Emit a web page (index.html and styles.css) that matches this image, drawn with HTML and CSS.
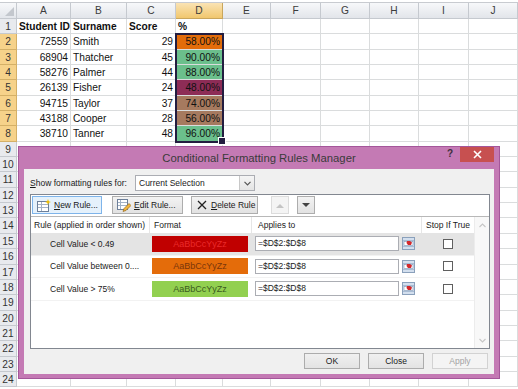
FILE: index.html
```html
<!DOCTYPE html>
<html lang="en">
<head>
    <meta charset="UTF-8">
    <title>Conditional Formatting Rules Manager</title>
    <link rel="stylesheet" href="styles.css">
</head>
<body>
    <div class="sheet">
        <div class="corner"></div>
        <div class="ch">A</div><div class="ch">B</div><div class="ch">C</div><div class="ch on">D</div><div class="ch">E</div><div class="ch">F</div><div class="ch">G</div><div class="ch">H</div><div class="ch">I</div><div class="ch">J</div>

        <div class="rh">1</div><div class="b">Student ID</div><div class="b">Surname</div><div class="b">Score</div><div class="b">%</div><div></div><div></div><div></div><div></div><div></div><div></div>
        <div class="rh on">2</div><div class="n">72559</div><div>Smith</div><div class="n">29</div><div class="n orange">58.00%</div><div></div><div></div><div></div><div></div><div></div><div></div>
        <div class="rh on">3</div><div class="n">68904</div><div>Thatcher</div><div class="n">45</div><div class="n green">90.00%</div><div></div><div></div><div></div><div></div><div></div><div></div>
        <div class="rh on">4</div><div class="n">58276</div><div>Palmer</div><div class="n">44</div><div class="n green">88.00%</div><div></div><div></div><div></div><div></div><div></div><div></div>
        <div class="rh on">5</div><div class="n">26139</div><div>Fisher</div><div class="n">24</div><div class="n maroon">48.00%</div><div></div><div></div><div></div><div></div><div></div><div></div>
        <div class="rh on">6</div><div class="n">94715</div><div>Taylor</div><div class="n">37</div><div class="n brown">74.00%</div><div></div><div></div><div></div><div></div><div></div><div></div>
        <div class="rh on">7</div><div class="n">43188</div><div>Cooper</div><div class="n">28</div><div class="n brown">56.00%</div><div></div><div></div><div></div><div></div><div></div><div></div>
        <div class="rh on">8</div><div class="n">38710</div><div>Tanner</div><div class="n">48</div><div class="n green">96.00%</div><div></div><div></div><div></div><div></div><div></div><div></div>
        <div class="rh">9</div><div></div><div></div><div></div><div></div><div></div><div></div><div></div><div></div><div></div><div></div>
        <div class="rh">10</div><div></div><div></div><div></div><div></div><div></div><div></div><div></div><div></div><div></div><div></div>
        <div class="rh">11</div><div></div><div></div><div></div><div></div><div></div><div></div><div></div><div></div><div></div><div></div>
        <div class="rh">12</div><div></div><div></div><div></div><div></div><div></div><div></div><div></div><div></div><div></div><div></div>
        <div class="rh">13</div><div></div><div></div><div></div><div></div><div></div><div></div><div></div><div></div><div></div><div></div>
        <div class="rh">14</div><div></div><div></div><div></div><div></div><div></div><div></div><div></div><div></div><div></div><div></div>
        <div class="rh">15</div><div></div><div></div><div></div><div></div><div></div><div></div><div></div><div></div><div></div><div></div>
        <div class="rh">16</div><div></div><div></div><div></div><div></div><div></div><div></div><div></div><div></div><div></div><div></div>
        <div class="rh">17</div><div></div><div></div><div></div><div></div><div></div><div></div><div></div><div></div><div></div><div></div>
        <div class="rh">18</div><div></div><div></div><div></div><div></div><div></div><div></div><div></div><div></div><div></div><div></div>
        <div class="rh">19</div><div></div><div></div><div></div><div></div><div></div><div></div><div></div><div></div><div></div><div></div>
        <div class="rh">20</div><div></div><div></div><div></div><div></div><div></div><div></div><div></div><div></div><div></div><div></div>
        <div class="rh">21</div><div></div><div></div><div></div><div></div><div></div><div></div><div></div><div></div><div></div><div></div>
        <div class="rh">22</div><div></div><div></div><div></div><div></div><div></div><div></div><div></div><div></div><div></div><div></div>
        <div class="rh">23</div><div></div><div></div><div></div><div></div><div></div><div></div><div></div><div></div><div></div><div></div>
        <div class="rh">24</div><div></div><div></div><div></div><div></div><div></div><div></div><div></div><div></div><div></div><div></div>
    </div>
    <div class="selection"></div>

    <div class="dialog">
        <div class="titlebar">
            <div class="spacer"></div>
            <div class="title">Conditional Formatting Rules Manager</div>
            <div class="controls">
                <span class="help">?</span>
                <span class="close">
                    <svg width="9" height="9" viewBox="0 0 9 9"><path d="M1 1l7 7M8 1l-7 7" stroke="#fff" stroke-width="1.6"/></svg>
                </span>
            </div>
        </div>
        <div class="body">
            <div class="showfor">
                <label><u>S</u>how formatting rules for:</label>
                <div class="select">
                    <span>Current Selection</span>
                    <span class="drop">
                        <svg width="7" height="5" viewBox="0 0 7 5"><path d="M0.5 0.8l3 3 3-3" fill="none" stroke="#555" stroke-width="1.2"/></svg>
                    </span>
                </div>
            </div>
            <div class="panel">
                <div class="toolbar">
                    <div class="tb hot new">
                        <svg width="14" height="13" viewBox="0 0 14 13"><rect x="0.5" y="2.5" width="11" height="10" fill="#fff" stroke="#6d7f99"/><path d="M1 5.5h10M1 8.5h10M4.5 3v9" stroke="#a3b2c6"/><path d="M11 0l0.8 2.2 2.2 0.8-2.2 0.8L11 6l-0.8-2.2L8 3l2.2-0.8z" fill="#f2c000"/></svg>
                        <span><u>N</u>ew Rule...</span>
                    </div>
                    <div class="tb edit">
                        <svg width="14" height="13" viewBox="0 0 14 13"><rect x="0.5" y="0.5" width="10" height="10" fill="#fff" stroke="#6d7f99"/><path d="M1 3.5h9M1 6.5h9M3.5 1v9" stroke="#a3b2c6"/><path d="M6 12.5l1-3 5-5 2 2-5 5z" fill="#f0b43c" stroke="#8a5a10" stroke-width="0.6"/></svg>
                        <span><u>E</u>dit Rule...</span>
                    </div>
                    <div class="tb delete">
                        <svg width="10" height="10" viewBox="0 0 10 10"><path d="M1 1l8 8M9 1l-8 8" stroke="#222" stroke-width="1.3"/></svg>
                        <span><u>D</u>elete Rule</span>
                    </div>
                    <div class="tb arrow up">
                        <svg width="8" height="5" viewBox="0 0 8 5"><path d="M0 5l4-4 4 4z" fill="#c4c4c4"/></svg>
                    </div>
                    <div class="tb arrow down">
                        <svg width="8" height="5" viewBox="0 0 8 5"><path d="M0 0l4 4 4-4z" fill="#444"/></svg>
                    </div>
                </div>
                <div class="main">
                    <div class="rules">
                        <div class="rhead">
                            <div>Rule (applied in order shown)</div>
                            <div>Format</div>
                            <div>Applies to</div>
                            <div>Stop If True</div>
                        </div>
                        <div class="rule sel">
                            <div class="name">Cell Value &lt; 0.49</div>
                            <div><div class="swatch red">AaBbCcYyZz</div></div>
                            <div class="applies">
                                <div class="input">=$D$2:$D$8</div>
                                <svg width="13" height="13" viewBox="0 0 13 13"><rect x="0.5" y="0.5" width="12" height="12" fill="#d3dfee" stroke="#8aa0bb"/><path d="M1 3.5h11M1 9.5h11" stroke="#a9bcd4"/><rect x="2" y="4.5" width="9" height="4" fill="#fff" stroke="#7d95b3" stroke-width="0.6"/><path d="M5 4h3l2 1.5-1 2.5H6l-1.5-2z" fill="#d3282c"/></svg>
                            </div>
                            <div class="stop"><span class="check"></span></div>
                        </div>
                        <div class="rule">
                            <div class="name">Cell Value between 0....</div>
                            <div><div class="swatch orange">AaBbCcYyZz</div></div>
                            <div class="applies">
                                <div class="input">=$D$2:$D$8</div>
                                <svg width="13" height="13" viewBox="0 0 13 13"><rect x="0.5" y="0.5" width="12" height="12" fill="#d3dfee" stroke="#8aa0bb"/><path d="M1 3.5h11M1 9.5h11" stroke="#a9bcd4"/><rect x="2" y="4.5" width="9" height="4" fill="#fff" stroke="#7d95b3" stroke-width="0.6"/><path d="M5 4h3l2 1.5-1 2.5H6l-1.5-2z" fill="#d3282c"/></svg>
                            </div>
                            <div class="stop"><span class="check"></span></div>
                        </div>
                        <div class="rule">
                            <div class="name">Cell Value &gt; 75%</div>
                            <div><div class="swatch lime">AaBbCcYyZz</div></div>
                            <div class="applies">
                                <div class="input">=$D$2:$D$8</div>
                                <svg width="13" height="13" viewBox="0 0 13 13"><rect x="0.5" y="0.5" width="12" height="12" fill="#d3dfee" stroke="#8aa0bb"/><path d="M1 3.5h11M1 9.5h11" stroke="#a9bcd4"/><rect x="2" y="4.5" width="9" height="4" fill="#fff" stroke="#7d95b3" stroke-width="0.6"/><path d="M5 4h3l2 1.5-1 2.5H6l-1.5-2z" fill="#d3282c"/></svg>
                            </div>
                            <div class="stop"><span class="check"></span></div>
                        </div>
                    </div>
                    <div class="scroll">
                        <svg width="7" height="5" viewBox="0 0 7 5"><path d="M0.5 4l3-3 3 3" fill="none" stroke="#c6c6c6" stroke-width="1.1"/></svg>
                        <svg width="7" height="5" viewBox="0 0 7 5"><path d="M0.5 1l3 3 3-3" fill="none" stroke="#c6c6c6" stroke-width="1.1"/></svg>
                    </div>
                </div>
            </div>
            <div class="footer">
                <div class="btn">OK</div>
                <div class="btn">Close</div>
                <div class="btn off">Apply</div>
            </div>
        </div>
    </div>
</body>
</html>
```

FILE: styles.css
```css
:root {
    --grid: #dadcdd;
    --head-line: #c5c9cf;
    --frame: #c47ab4;
    --dlg-bg: #f0f0f0;
}
* {
    box-sizing: border-box;
}
body {
    margin: 0;
    width: 518px;
    height: 389px;
    overflow: hidden;
    position: relative;
    background: #fff;
    font-family: "Liberation Sans", Arial, sans-serif;
}

/* feuille de calcul */
.sheet {
    display: grid;
    grid-template-columns: 17px 54px 56px 49px 47px 48px 50px 49px 49px 50px 49px;
    grid-template-rows: 16px;
    grid-auto-rows: 15.35px;
    margin-top: 2px;
    border-top: 1px solid #c8cbd0;
    font-size: 10.2px;
    color: #111;
}
.sheet > div {
    border-right: 1px solid var(--grid);
    border-bottom: 1px solid var(--grid);
    padding: 0 2px;
    line-height: 15px;
    white-space: nowrap;
    overflow: hidden;
}
.sheet .b {
    font-weight: bold;
}
.sheet .n {
    text-align: right;
}
.sheet .corner {
    position: relative;
    background: linear-gradient(#f7f8fa, #e3e6eb);
    border-color: var(--head-line);
}
.sheet .corner::after {
    content: '';
    position: absolute;
    right: 2px;
    bottom: 2px;
    border-left: 9px solid transparent;
    border-bottom: 9px solid #c3c7cd;
}
.sheet .ch {
    background: linear-gradient(#f7f8fa, #e2e5ea);
    border-color: var(--head-line);
    text-align: center;
    color: #3c3c3c;
    line-height: 16px;
}
.sheet .ch.on {
    background: linear-gradient(#fae3b4, #f1c76e);
    border-color: #c9a65c;
}
.sheet .rh {
    background: #e8eaee;
    border-color: var(--head-line);
    text-align: center;
    color: #333;
    padding: 0;
}
.sheet .rh.on {
    background: #f6d28a;
    border-color: #d4b067;
}
.sheet .orange { background: #e36c0a; }
.sheet .green { background: #6bbf8c; }
.sheet .maroon { background: #8d2c56; }
.sheet .brown { background: #a67a5f; }

.selection {
    position: absolute;
    left: 175px;
    top: 33.4px;
    width: 49px;
    height: 109.4px;
    border: 2px solid #231d40;
}
.selection::after {
    content: '';
    position: absolute;
    right: -4px;
    bottom: -4px;
    width: 6px;
    height: 6px;
    background: #231d40;
    border: 1px solid #fff;
}

/* fenetre de dialogue */
.dialog {
    position: absolute;
    left: 18px;
    top: 146px;
    width: 482px;
    height: 233px;
    background: var(--frame);
    border: 1px solid #a4569a;
    padding: 0 5px 4px;
    display: flex;
    flex-direction: column;
    font-size: 8.5px;
    color: #1a1a1a;
}
.titlebar {
    height: 22px;
    display: flex;
    align-items: flex-start;
    margin: 0 -5px;
}
.titlebar .spacer,
.titlebar .controls {
    width: 56px;
}
.titlebar .title {
    flex: 1;
    text-align: center;
    line-height: 23px;
    font-size: 11.3px;
    color: #3a3a3a;
}
.titlebar .controls {
    display: flex;
    align-items: flex-start;
    justify-content: flex-end;
    padding-right: 5px;
}
.titlebar .help {
    font-weight: bold;
    font-size: 10px;
    color: #3e2f3c;
    line-height: 14px;
    margin-right: 7px;
}
.titlebar .close {
    width: 34px;
    height: 15px;
    background: #c75050;
    display: flex;
    align-items: center;
    justify-content: center;
}
.body {
    flex: 1;
    background: var(--dlg-bg);
    padding: 6px 4px 0 6px;
}
.showfor {
    display: flex;
    align-items: center;
    height: 16px;
}
.showfor label {
    width: 105px;
}
.select {
    width: 120px;
    height: 16px;
    background: #fff;
    border: 1px solid #abadb3;
    padding-left: 3px;
    display: flex;
    align-items: center;
    justify-content: space-between;
}
.select .drop {
    width: 15px;
    height: 14px;
    border-left: 1px solid #c8c8c8;
    background: linear-gradient(#f5f5f5, #e4e4e4);
    display: flex;
    align-items: center;
    justify-content: center;
}

.panel {
    width: 460px;
    height: 155px;
    margin-top: 3px;
    background: #fff;
    border: 1px solid #828790;
    display: flex;
    flex-direction: column;
}
.toolbar {
    display: flex;
    padding: 1px 1px 2px;
    border-bottom: 1px solid #b8b8b8;
}
.tb {
    height: 18px;
    flex-shrink: 0;
    border: 1px solid #adadad;
    background: linear-gradient(#f3f3f3, #e2e2e2);
    display: flex;
    align-items: center;
    gap: 3px;
    padding: 0 0 0 4px;
    white-space: nowrap;
    overflow: hidden;
}
.tb svg {
    flex-shrink: 0;
}
.tb.hot {
    border-color: #7eb4ea;
    background: #e5f1fb;
}
.tb.new { width: 70px; }
.tb.edit { width: 71px; margin-left: 10px; }
.tb.delete { width: 67px; margin-left: 8px; padding-left: 5px; gap: 4px; }
.tb.arrow {
    width: 18px;
    justify-content: center;
    padding: 0;
}
.tb.up {
    margin-left: 13px;
    border-color: #dcdcdc;
    background: #f4f4f4;
}
.tb.down {
    margin-left: 8px;
}

.main {
    flex: 1;
    display: flex;
}
.rules {
    flex: 1;
}
.rhead,
.rule {
    display: grid;
    grid-template-columns: 119px 102px 170px 52px;
}
.rhead {
    height: 16px;
    line-height: 16px;
}
.rhead div {
    border-right: 1px solid #e6e6e6;
    padding-left: 3px;
}
.rhead div:nth-child(2) { padding-left: 4px; }
.rhead div:nth-child(3) { padding-left: 6px; }
.rhead div:nth-child(4) { padding-left: 4px; border-right: 0; }
.rule {
    height: 22.5px;
    align-items: center;
    border-bottom: 1px solid #f2f2f2;
}
.rule.sel {
    background: #e4e4e4;
}
.rule .name {
    padding-left: 19px;
    white-space: nowrap;
}
.swatch {
    margin-left: 2px;
    width: 96px;
    height: 16px;
    line-height: 16px;
    text-align: center;
    font-size: 9px;
}
.swatch.red { background: #c00000; color: #ea2a2a; }
.swatch.orange { background: #e46c0a; color: #7a360a; }
.swatch.lime { background: #92d050; color: #3a5a20; }
.applies {
    display: flex;
    align-items: center;
    gap: 3px;
    padding-left: 3px;
}
.input {
    width: 144px;
    height: 15px;
    line-height: 13px;
    background: #fff;
    border: 1px solid #abadb3;
    padding-left: 2px;
}
.stop {
    display: flex;
    justify-content: center;
}
.check {
    width: 10px;
    height: 10px;
    background: #fff;
    border: 1px solid #5f5f5f;
}
.scroll {
    width: 15px;
    background: #f8f8f8;
    border-left: 1px solid #ececec;
    display: flex;
    flex-direction: column;
    align-items: center;
    justify-content: space-between;
    padding: 6px 0 5px;
}

.footer {
    display: flex;
    justify-content: flex-end;
    gap: 8px;
    margin-top: 4px;
    padding-right: 2px;
}
.btn {
    width: 56px;
    height: 16px;
    line-height: 14px;
    text-align: center;
    border: 1px solid #acacac;
    background: linear-gradient(#f0f0f0, #e3e3e3);
}
.btn.off {
    border-color: #d2d2d2;
    background: #f4f4f4;
    color: #a3a3a3;
}
```
